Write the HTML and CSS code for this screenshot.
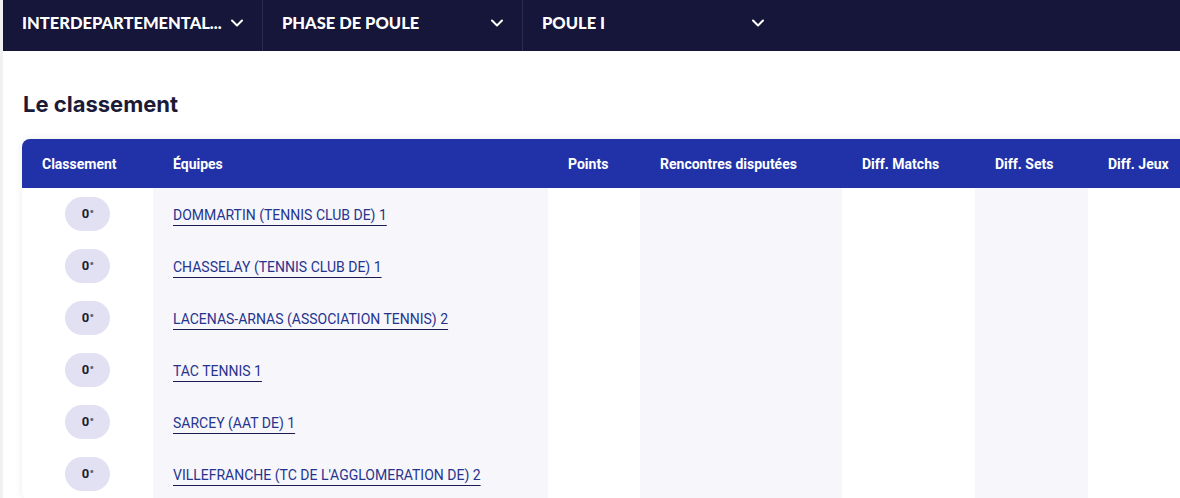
FILE: index.html
```html
<!DOCTYPE html>
<html lang="fr">
    <head>
        <meta charset="UTF-8">
        <meta name="viewport" content="width=device-width, initial-scale=1.0">
        <title>Le classement</title>
        <link rel="stylesheet" href="styles.css">
    </head>
    <body>
        <div class="page">
            <!--Barre de sélection-->
            <nav class="filtres">
                <div class="filtre">
                    <span>INTERDEPARTEMENTAL...</span>
                    <svg class="chevron" width="12" height="8" viewBox="0 0 12 8"><polyline points="1,1.5 6,6.5 11,1.5"/></svg>
                </div>
                <div class="filtre">
                    <span>PHASE DE POULE</span>
                    <svg class="chevron" width="12" height="8" viewBox="0 0 12 8"><polyline points="1,1.5 6,6.5 11,1.5"/></svg>
                </div>
                <div class="filtre filtre-dernier">
                    <span>POULE I</span>
                    <svg class="chevron" width="12" height="8" viewBox="0 0 12 8"><polyline points="1,1.5 6,6.5 11,1.5"/></svg>
                </div>
            </nav>

            <h1 class="titre">Le classement</h1>

            <!--Tableau du classement-->
            <div class="carte">
                <table class="classement">
                    <colgroup>
                        <col class="c1"><col class="c2"><col class="c3"><col class="c4"><col class="c5"><col class="c6"><col class="c7">
                    </colgroup>
                    <thead>
                        <tr>
                            <th>Classement</th>
                            <th>Équipes</th>
                            <th>Points</th>
                            <th>Rencontres disputées</th>
                            <th>Diff. Matchs</th>
                            <th>Diff. Sets</th>
                            <th>Diff. Jeux</th>
                        </tr>
                    </thead>
                    <tbody>
                        <tr>
                            <td class="rang"><span class="pastille">0<sup>e</sup></span></td>
                            <td class="clair"><a href="#">DOMMARTIN (TENNIS CLUB DE) 1</a></td>
                            <td></td><td class="clair"></td><td></td><td class="clair"></td><td></td>
                        </tr>
                        <tr>
                            <td class="rang"><span class="pastille">0<sup>e</sup></span></td>
                            <td class="clair"><a href="#">CHASSELAY (TENNIS CLUB DE) 1</a></td>
                            <td></td><td class="clair"></td><td></td><td class="clair"></td><td></td>
                        </tr>
                        <tr>
                            <td class="rang"><span class="pastille">0<sup>e</sup></span></td>
                            <td class="clair"><a href="#">LACENAS-ARNAS (ASSOCIATION TENNIS) 2</a></td>
                            <td></td><td class="clair"></td><td></td><td class="clair"></td><td></td>
                        </tr>
                        <tr>
                            <td class="rang"><span class="pastille">0<sup>e</sup></span></td>
                            <td class="clair"><a href="#">TAC TENNIS 1</a></td>
                            <td></td><td class="clair"></td><td></td><td class="clair"></td><td></td>
                        </tr>
                        <tr>
                            <td class="rang"><span class="pastille">0<sup>e</sup></span></td>
                            <td class="clair"><a href="#">SARCEY (AAT DE) 1</a></td>
                            <td></td><td class="clair"></td><td></td><td class="clair"></td><td></td>
                        </tr>
                        <tr>
                            <td class="rang"><span class="pastille">0<sup>e</sup></span></td>
                            <td class="clair"><a href="#">VILLEFRANCHE (TC DE L'AGGLOMERATION DE) 2</a></td>
                            <td></td><td class="clair"></td><td></td><td class="clair"></td><td></td>
                        </tr>
                    </tbody>
                </table>
            </div>
        </div>
    </body>
</html>
```

FILE: styles.css
```css
/*Reset*/
html,
body,
h1,
table {
margin: 0;
padding: 0;
}

html {
box-sizing: border-box;
}

*, *::before, *::after {
box-sizing: inherit;
}

table {
border-collapse: collapse;
border-spacing: 0;
}

/*Page*/

body{
    background-color: #f1f1f4;
    overflow: hidden;
    font-family: Roboto, "Liberation Sans", sans-serif;
}

.page{
    margin-left: 3px;
    height: 498px;
    background-color: #ffffff;
    overflow: hidden;
}

/*Barre des filtres*/

.filtres{
    display: flex;
    height: 51px;
    background-color: #16163a;
}

.filtre{
    display: flex;
    justify-content: space-between;
    align-items: flex-start;
    width: 260px;
    padding: 13px 19px 0 19px;
    border-right: 1px solid #2c2c52;
    color: #ffffff;
    font-family: Lato, "Liberation Sans", sans-serif;
    font-weight: 900;
    font-size: 16.5px;
    line-height: 20px;
}

.filtre-dernier{
    border-right: none;
}

.chevron{
    margin-top: 6px;
    fill: none;
    stroke: #ffffff;
    stroke-width: 2;
    stroke-linecap: round;
    stroke-linejoin: round;
}

/*Titre*/

.titre{
    margin: 39px 0 21px 20px;
    font-family: Inter, "Liberation Sans", sans-serif;
    font-weight: 700;
    font-size: 22px;
    line-height: 28px;
    color: #1b1b38;
}

/*Tableau*/

.carte{
    width: 1240px;
    margin-left: 19px;
    border-radius: 8px;
    background-color: #ffffff;
    box-shadow: 0 0 8px rgba(20, 20, 60, 0.08);
    overflow: hidden;
}

.classement{
    width: 100%;
    table-layout: fixed;
}

.c1{ width: 131px; }
.c2{ width: 395px; }
.c3{ width: 92px; }
.c4{ width: 202px; }
.c5{ width: 133px; }
.c6{ width: 113px; }

.classement th{
    height: 49px;
    padding: 0 0 0 20px;
    text-align: left;
    background-color: #2132a8;
    color: #ffffff;
    font-weight: 700;
    font-size: 14px;
}

.classement td{
    height: 52px;
    padding: 0 0 0 20px;
}

.classement td.clair{
    background-color: #f6f6fb;
}

.classement td.rang{
    padding: 0;
    text-align: center;
}

.pastille{
    display: inline-block;
    width: 45px;
    height: 34px;
    border-radius: 17px;
    background-color: #e1e1f3;
    color: #1d1d2e;
    font-weight: 700;
    font-size: 13px;
    line-height: 34px;
    text-align: center;
    vertical-align: middle;
}

.pastille sup{
    font-size: 6px;
    font-weight: 400;
    margin-left: 1px;
    line-height: 0;
    vertical-align: 5px;
}

.classement a{
    color: #27348e;
    font-size: 14px;
    text-decoration: underline;
    text-decoration-color: #1b1b50;
    text-underline-offset: 5px;
    text-decoration-thickness: 1px;
}
```
